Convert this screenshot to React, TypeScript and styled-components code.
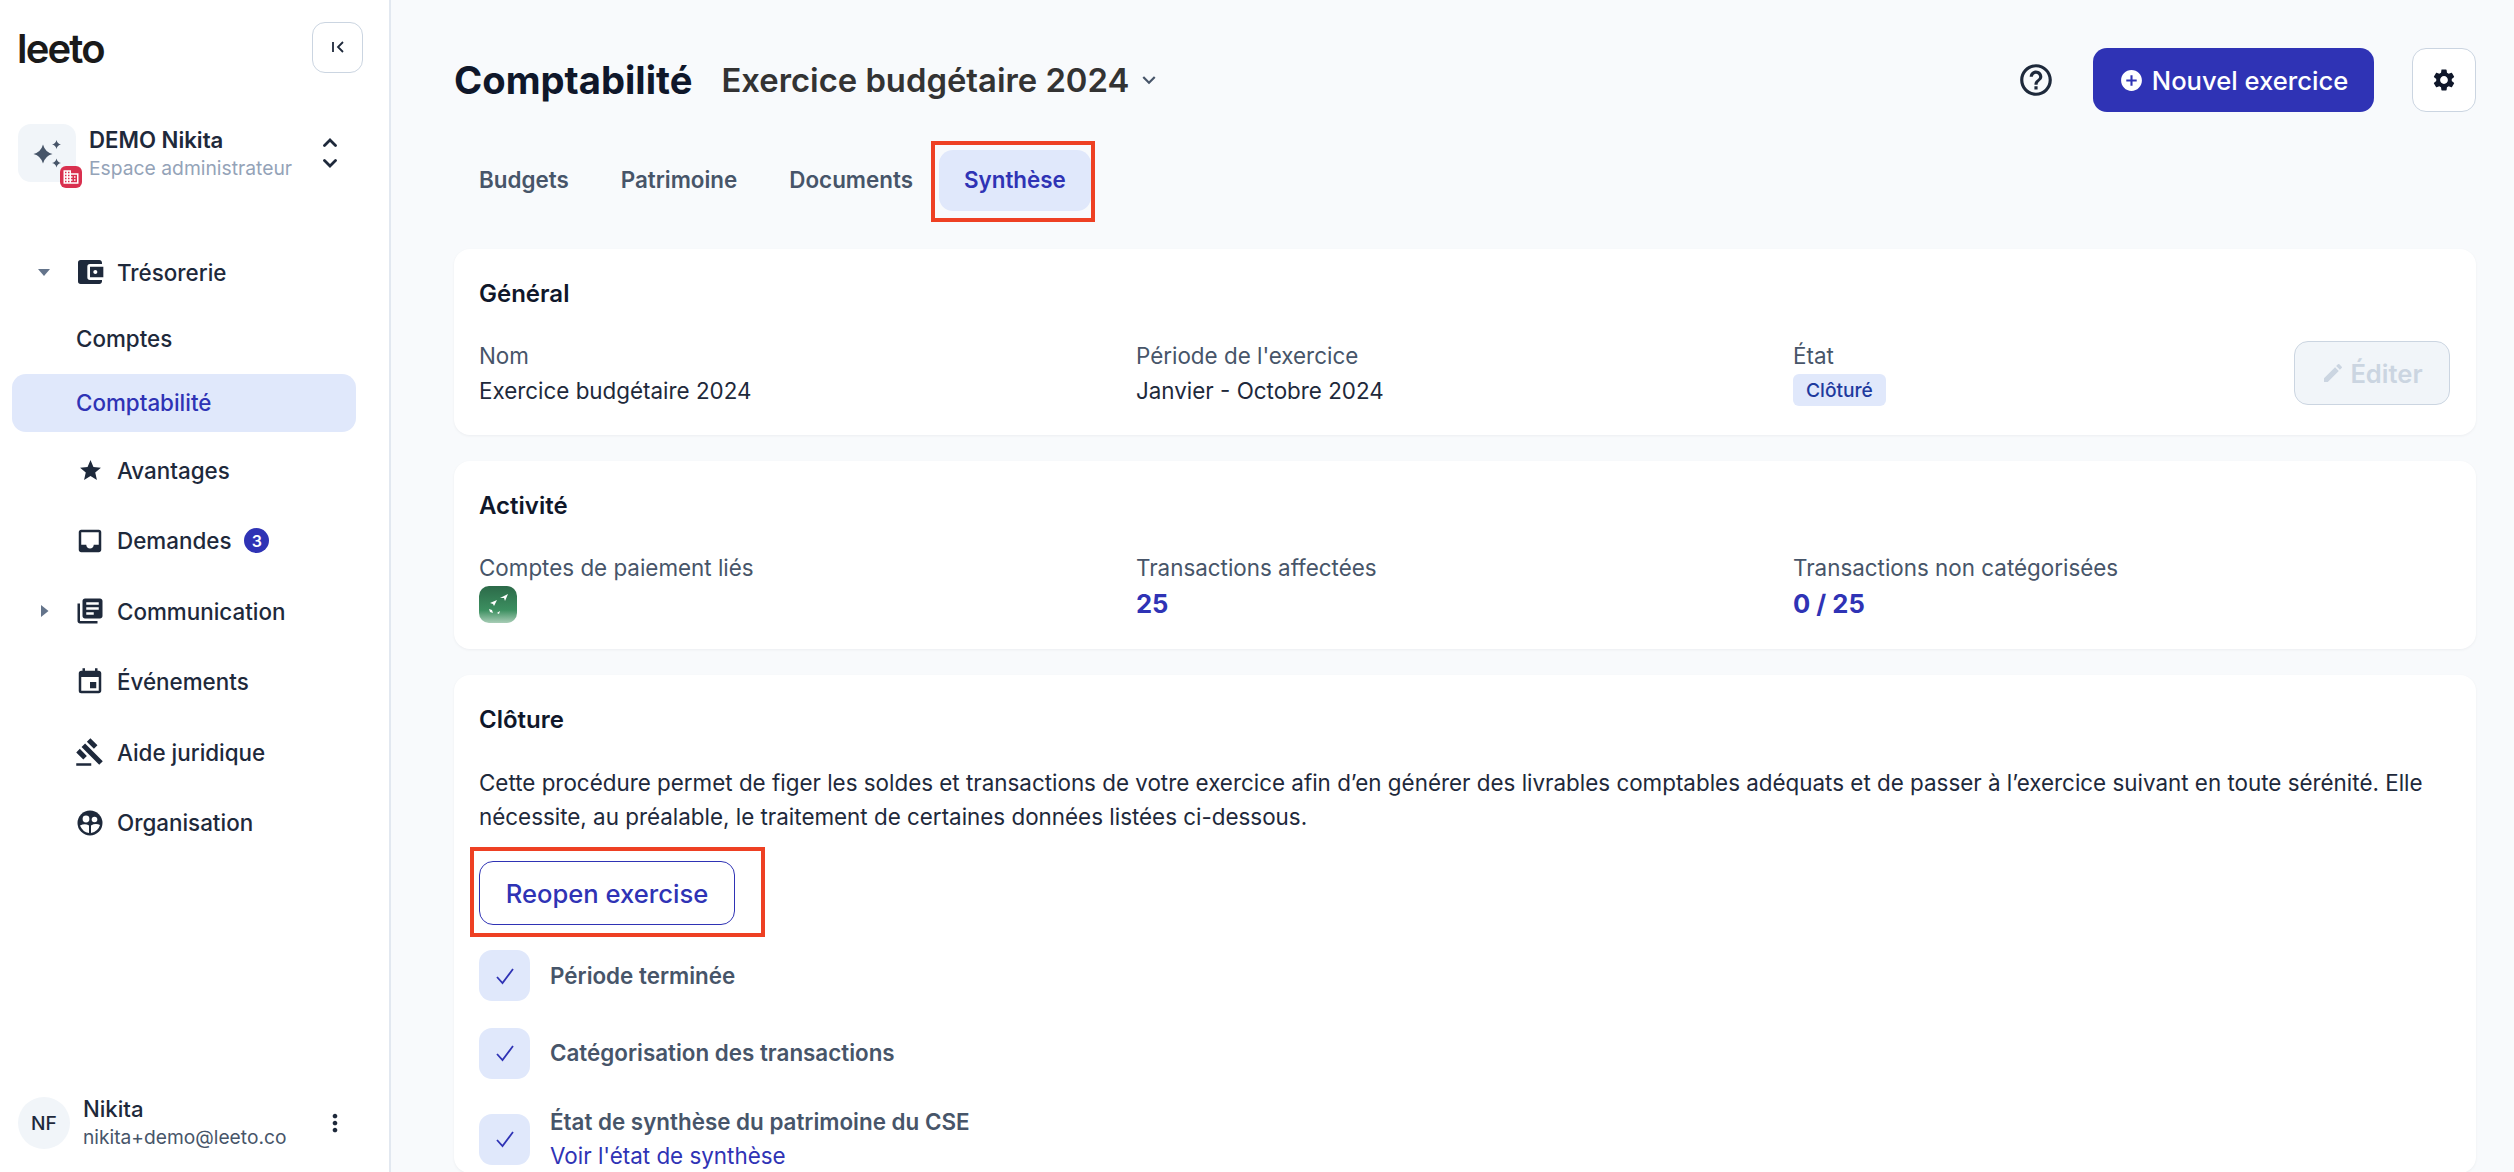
import React from "react";
import styled, { createGlobalStyle } from "styled-components";
import {
  MdAccountBalanceWallet,
  MdAddCircle,
  MdBusiness,
  MdEdit,
  MdEvent,
  MdGavel,
  MdHelpOutline,
  MdInbox,
  MdKeyboardArrowDown,
  MdLibraryBooks,
  MdMoreVert,
  MdSettings,
  MdStar,
} from "react-icons/md";

const GlobalStyle = createGlobalStyle`
  html, body {
    margin: 0;
    height: 100%;
    overflow: hidden;
    background: #f8fafc;
    font-family: Inter, "Liberation Sans", sans-serif;
    color: #1e293b;
  }
  * { box-sizing: border-box; }
`;

const Page = styled.div`
  display: grid;
  grid-template-columns: 391px 1fr;
  height: 1172px;
  overflow: hidden;
`;

/* sidebar */
const Sidebar = styled.aside`
  display: flex;
  flex-direction: column;
  padding-top: 22px;
  background: #fff;
  border-right: 2px solid #e2e8f0;
`;
const SidebarHeader = styled.div`
  display: flex;
  align-items: center;
  justify-content: space-between;
  height: 50px;
  padding: 0 26px 0 17px;
`;
const Logo = styled.span`
  padding-top: 4px;
  font-family: Inter, sans-serif;
  font-size: 40px;
  font-weight: 600;
  line-height: 50px;
  letter-spacing: -1.8px;
  color: #1a1a1a;
`;
const CollapseButton = styled.button`
  display: flex;
  align-items: center;
  justify-content: center;
  width: 51px;
  height: 51px;
  padding: 0;
  background: #fff;
  border: 1px solid #cbd5e1;
  border-radius: 13px;
`;
const Workspace = styled.div`
  display: flex;
  align-items: center;
  height: 63px;
  margin-top: 52px;
  padding-left: 18px;
`;
const WorkspaceIcon = styled.div`
  position: relative;
  display: flex;
  align-items: center;
  justify-content: center;
  flex: none;
  width: 58px;
  height: 58px;
  margin-bottom: 5px;
  background: #f1f5f9;
  border-radius: 13px;
`;
const WorkspaceBadge = styled.span`
  position: absolute;
  right: -6px;
  bottom: -6px;
  display: flex;
  align-items: center;
  justify-content: center;
  width: 22px;
  height: 22px;
  background: #d9304f;
  border-radius: 6px;
  color: #fff;
`;
const WorkspaceText = styled.div`
  flex: 1;
  margin-left: 13px;
  margin-bottom: 6px;
`;
const WorkspaceName = styled.div`
  font-size: 22.2px;
  font-weight: 600;
  line-height: 30px;
`;
const WorkspaceRole = styled.div`
  font-size: 19.3px;
  line-height: 26px;
  color: #94a3b8;
`;
const SwitchIcon = styled.svg`
  flex: none;
  margin: 0 52px 6px 0;
`;
const Nav = styled.nav`
  display: flex;
  flex-direction: column;
  margin-top: 50px;
`;
const NavRow = styled.div`
  display: flex;
  align-items: center;
  height: 70.4px;
  padding-left: 77px;
  position: relative;
  font-size: 22.4px;
  font-weight: 500;
`;
const NavCaret = styled.svg`
  position: absolute;
  left: 30px;
  top: 50%;
  width: 28px;
  height: 14px;
  margin-top: -7px;
  fill: #64748b;
`;
const NavIcon = styled.span`
  display: flex;
  align-items: center;
  justify-content: center;
  width: 26px;
  margin-right: 14px;
  color: #1e293b;
  svg { flex: none; }
`;
const NavCount = styled.span`
  display: flex;
  align-items: center;
  justify-content: center;
  width: 25px;
  height: 25px;
  margin-left: 13px;
  background: #2f33b5;
  border-radius: 50%;
  color: #fff;
  font-size: 16px;
  font-weight: 600;
`;
const SubRow = styled.div<{ $active?: boolean }>`
  display: flex;
  align-items: center;
  height: 58px;
  margin: 3px 33px 3px 12px;
  padding: 0 0 2px 64px;
  border-radius: 14px;
  font-size: 22.4px;
  font-weight: 500;
  background: ${(p) => (p.$active ? "#e0e8fb" : "transparent")};
  color: ${(p) => (p.$active ? "#2f33b5" : "#1e293b")};
`;
const UserBar = styled.div`
  display: flex;
  align-items: center;
  margin-top: auto;
  padding: 0 0 21px 18px;
`;
const Avatar = styled.div`
  display: flex;
  align-items: center;
  justify-content: center;
  flex: none;
  width: 52px;
  height: 52px;
  background: #f1f5f9;
  border-radius: 50%;
  font-size: 19.2px;
  font-weight: 500;
`;
const UserText = styled.div`
  flex: 1;
  margin-left: 13px;
`;
const UserName = styled.div`
  font-size: 22.2px;
  font-weight: 500;
  line-height: 28px;
`;
const UserMail = styled.div`
  font-size: 19.2px;
  line-height: 28px;
  color: #475569;
`;
const UserMenu = styled.span`
  display: flex;
  margin-right: 40px;
  color: #1e293b;
`;

/* main column */
const Main = styled.main`
  min-width: 0;
  padding: 48px 38px 0 63px;
  overflow: hidden;
`;
const TopBar = styled.header`
  display: flex;
  align-items: center;
  height: 64px;
`;
const Title = styled.h1`
  margin: 0;
  font-size: 38.2px;
  font-weight: 700;
  color: #0f172a;
`;
const Subtitle = styled.h2`
  margin: 0 0 0 29px;
  font-size: 32.8px;
  font-weight: 600;
  color: #333;
`;
const SubtitleCaret = styled.span`
  display: flex;
  margin-left: 7px;
  color: #475569;
`;
const TopActions = styled.div`
  display: flex;
  align-items: center;
  margin-left: auto;
`;
const HelpIcon = styled.span`
  display: flex;
  margin-right: 38px;
  color: #1e293b;
`;
const PrimaryButton = styled.button`
  display: flex;
  align-items: center;
  justify-content: center;
  gap: 8px;
  width: 281px;
  height: 64px;
  padding: 0;
  background: #2f33b5;
  border: none;
  border-radius: 14px;
  color: #fff;
  font-family: inherit;
  font-size: 25.6px;
  font-weight: 500;
`;
const SquareButton = styled.button`
  display: flex;
  align-items: center;
  justify-content: center;
  width: 64px;
  height: 64px;
  margin-left: 38px;
  padding: 0;
  background: #fff;
  border: 1px solid #cbd5e1;
  border-radius: 14px;
  color: #0f172a;
`;
const Tabs = styled.div`
  display: flex;
  gap: 2px;
  height: 61px;
  margin-top: 38px;
`;
const Flagged = styled.div<{ $inset: string }>`
  position: relative;
  &::after {
    content: "";
    position: absolute;
    inset: ${(p) => p.$inset};
    border: 4px solid #ee4023;
    pointer-events: none;
  }
`;
const FlaggedTab = styled(Flagged)`
  margin-left: -1px;
`;
const Tab = styled.div<{ $active?: boolean }>`
  display: flex;
  align-items: center;
  height: 61px;
  padding: 0 25px 3px;
  border-radius: 14px;
  font-size: 22.4px;
  font-weight: 600;
  background: ${(p) => (p.$active ? "#e0e8fb" : "transparent")};
  color: ${(p) => (p.$active ? "#2f33b5" : "#475569")};
`;
const Cards = styled.div`
  display: flex;
  flex-direction: column;
  gap: 26px;
  margin-top: 38px;
`;
const Card = styled.section<{ $height?: number }>`
  padding: 30px 26px 0 25px;
  min-height: ${(p) => (p.$height ? `${p.$height}px` : "auto")};
  background: #fff;
  border-radius: 16px;
  box-shadow: 0 1px 3px rgba(15, 23, 42, 0.05);
`;
const CardTitle = styled.h3`
  margin: 0;
  font-size: 24px;
  font-weight: 600;
  line-height: 30px;
  color: #0f172a;
`;
const FieldRow = styled.div`
  display: flex;
  align-items: center;
  margin-top: 29px;
`;
const FieldGrid = styled.div`
  flex: 1;
  display: grid;
  grid-template-columns: 657px 657px 1fr;
`;
const FieldLabel = styled.div`
  font-size: 22.4px;
  line-height: 36px;
  color: #475569;
`;
const FieldValue = styled.div`
  font-size: 22.4px;
  line-height: 34px;
  color: #1e293b;
`;
const FieldStat = styled.div`
  font-size: 25.6px;
  font-weight: 700;
  line-height: 36px;
  color: #2f33b5;
`;
const Tag = styled.span`
  display: inline-block;
  height: 32px;
  padding: 0 13px;
  background: #e0e8fb;
  border-radius: 6px;
  color: #1e3a9e;
  font-size: 19.2px;
  font-weight: 500;
  line-height: 32px;
`;
const EditButton = styled.button`
  display: flex;
  align-items: center;
  justify-content: center;
  gap: 5px;
  flex: none;
  width: 156px;
  height: 64px;
  padding: 0;
  background: #f1f5f9;
  border: 1px solid #cbd5e1;
  border-radius: 14px;
  color: #cbd5e1;
  font-family: inherit;
  font-size: 25.6px;
  font-weight: 600;
`;
const BankLogo = styled.svg`
  display: block;
  width: 38px;
  height: 37px;
`;
const Paragraph = styled.p`
  margin: 31px 0 0;
  font-size: 22.4px;
  line-height: 33.5px;
  color: #1e293b;
`;
const OutlineWrap = styled(Flagged)`
  display: block;
  width: 256px;
  margin-top: 28px;
`;
const OutlineButton = styled.button`
  display: block;
  width: 256px;
  height: 64px;
  padding: 0;
  background: #fff;
  border: 1px solid #2f33b5;
  border-radius: 14px;
  color: #2f33b5;
  font-family: inherit;
  font-size: 25.6px;
  font-weight: 500;
`;
const CheckList = styled.div`
  display: flex;
  flex-direction: column;
  gap: 26.5px;
  margin-top: 25px;
`;
const CheckRow = styled.div`
  display: flex;
  align-items: center;
  gap: 20px;
`;
const CheckBox = styled.span`
  display: flex;
  align-items: center;
  justify-content: center;
  flex: none;
  width: 51px;
  height: 51px;
  background: #e0e8fb;
  border-radius: 13px;
`;
const CheckLabel = styled.div`
  font-size: 22.4px;
  font-weight: 600;
  line-height: 34px;
  color: #475569;
`;
const CheckLink = styled.a`
  display: block;
  font-size: 22.4px;
  line-height: 34px;
  color: #2f33b5;
`;

const Sparkles = () => (
  <svg width="32" height="32" viewBox="0 0 32 32" fill="#475569">
    <path d="M12 7.500Q14 15 21.500 17 14 19 12 26.500 10 19 2.500 17 10 15 12 7.500z" />
    <path d="M25.500 3Q26.300 6.700 30 7.500 26.300 8.300 25.500 12 24.700 8.300 21 7.500 24.700 6.700 25.500 3z" />
    <path d="M25.500 21.500Q26.300 25.200 30 26 26.300 26.800 25.500 30.500 24.700 26.800 21 26 24.700 25.200 25.500 21.500z" />
  </svg>
);

const CollapseIcon = () => (
  <svg width="14" height="14" viewBox="0 0 14 14" fill="none" stroke="#1e293b" strokeWidth="1.8">
    <path d="M2 2v10" />
    <path d="M12 2L7 7l5 5" />
  </svg>
);

const CheckIcon = () => (
  <svg width="20" height="18" viewBox="0 0 20 18" fill="none" stroke="#2f33b5" strokeWidth="1.8">
    <path d="M2 10l5.500 6L18 2" />
  </svg>
);

const OrganisationIcon = () => (
  <svg width="26" height="26" viewBox="0 0 26 26">
    <circle cx="13" cy="13" r="12.500" fill="#1e293b" />
    <circle cx="9" cy="9" r="3.400" fill="#fff" />
    <circle cx="17.500" cy="9.500" r="2.800" fill="#fff" />
    <path d="M3 15.500Q8 13 12 15.500V23Q5.500 22 3 15.500z" fill="#fff" />
    <path d="M14 15.500Q18.500 13 23 15Q21 21.500 14 23z" fill="#fff" />
  </svg>
);

const App = () => {
  return (
    <>
      <GlobalStyle />
      <Page>
        <Sidebar>
          <SidebarHeader>
            <Logo>leeto</Logo>
            <CollapseButton>
              <CollapseIcon />
            </CollapseButton>
          </SidebarHeader>
          <Workspace>
            <WorkspaceIcon>
              <Sparkles />
              <WorkspaceBadge>
                <MdBusiness size={18} />
              </WorkspaceBadge>
            </WorkspaceIcon>
            <WorkspaceText>
              <WorkspaceName>DEMO Nikita</WorkspaceName>
              <WorkspaceRole>Espace administrateur</WorkspaceRole>
            </WorkspaceText>
            <SwitchIcon width="14" height="30" viewBox="0 0 14 30" fill="none" stroke="#1e293b" strokeWidth="2.800" strokeLinecap="round">
              <path d="M1.500 7.500L7 2l5.500 5.500" />
              <path d="M1.500 22.500L7 28l5.500-5.500" />
            </SwitchIcon>
          </Workspace>
          <Nav>
            <NavRow>
              <NavCaret viewBox="0 0 28 14">
                <path d="M8 4h12L14 11z" />
              </NavCaret>
              <NavIcon>
                <MdAccountBalanceWallet size={32} />
              </NavIcon>
              Trésorerie
            </NavRow>
            <SubRow>Comptes</SubRow>
            <SubRow $active>Comptabilité</SubRow>
            <NavRow>
              <NavIcon>
                <MdStar size={25} />
              </NavIcon>
              Avantages
            </NavRow>
            <NavRow>
              <NavIcon>
                <MdInbox size={30} />
              </NavIcon>
              Demandes
              <NavCount>3</NavCount>
            </NavRow>
            <NavRow>
              <NavCaret viewBox="0 0 28 14">
                <path d="M11 1l7.500 6L11 13z" />
              </NavCaret>
              <NavIcon>
                <MdLibraryBooks size={30} />
              </NavIcon>
              Communication
            </NavRow>
            <NavRow>
              <NavIcon>
                <MdEvent size={30} />
              </NavIcon>
              Événements
            </NavRow>
            <NavRow>
              <NavIcon>
                <MdGavel size={30} />
              </NavIcon>
              Aide juridique
            </NavRow>
            <NavRow>
              <NavIcon>
                <OrganisationIcon />
              </NavIcon>
              Organisation
            </NavRow>
          </Nav>
          <UserBar>
            <Avatar>NF</Avatar>
            <UserText>
              <UserName>Nikita</UserName>
              <UserMail>nikita+demo@leeto.co</UserMail>
            </UserText>
            <UserMenu>
              <MdMoreVert size={28} />
            </UserMenu>
          </UserBar>
        </Sidebar>
        <Main>
          <TopBar>
            <Title>Comptabilité</Title>
            <Subtitle>Exercice budgétaire 2024</Subtitle>
            <SubtitleCaret>
              <MdKeyboardArrowDown size={26} />
            </SubtitleCaret>
            <TopActions>
              <HelpIcon>
                <MdHelpOutline size={38} />
              </HelpIcon>
              <PrimaryButton>
                <MdAddCircle size={25} />
                Nouvel exercice
              </PrimaryButton>
              <SquareButton>
                <MdSettings size={26} />
              </SquareButton>
            </TopActions>
          </TopBar>
          <Tabs>
            <Tab>Budgets</Tab>
            <Tab>Patrimoine</Tab>
            <Tab>Documents</Tab>
            <FlaggedTab $inset="-9px -4px -11px -8px">
              <Tab $active>Synthèse</Tab>
            </FlaggedTab>
          </Tabs>
          <Cards>
            <Card $height={186}>
              <CardTitle>Général</CardTitle>
              <FieldRow>
                <FieldGrid>
                  <div>
                    <FieldLabel>Nom</FieldLabel>
                    <FieldValue>Exercice budgétaire 2024</FieldValue>
                  </div>
                  <div>
                    <FieldLabel>Période de l'exercice</FieldLabel>
                    <FieldValue>Janvier - Octobre 2024</FieldValue>
                  </div>
                  <div>
                    <FieldLabel>État</FieldLabel>
                    <Tag>Clôturé</Tag>
                  </div>
                </FieldGrid>
                <EditButton>
                  <MdEdit size={24} />
                  Éditer
                </EditButton>
              </FieldRow>
            </Card>
            <Card $height={188}>
              <CardTitle>Activité</CardTitle>
              <FieldRow>
                <FieldGrid>
                  <div>
                    <FieldLabel>Comptes de paiement liés</FieldLabel>
                    <BankLogo viewBox="0 0 38 37">
                      <defs>
                        <linearGradient id="bank" x1="0" y1="0" x2="0" y2="1">
                          <stop offset="0" stopColor="#2c6a49" />
                          <stop offset="0.65" stopColor="#3c8f60" />
                          <stop offset="1" stopColor="#a8cdb6" />
                        </linearGradient>
                      </defs>
                      <rect width="38" height="37" rx="10" fill="url(#bank)" />
                      <path d="M21 12l8-4-3 7-1-3zM11 17l7-3-3 6-1-2zM10 23l3 1 1 3-3-1zM18 27l3-2-1 3z" fill="#fff" />
                    </BankLogo>
                  </div>
                  <div>
                    <FieldLabel>Transactions affectées</FieldLabel>
                    <FieldStat>25</FieldStat>
                  </div>
                  <div>
                    <FieldLabel>Transactions non catégorisées</FieldLabel>
                    <FieldStat>0 / 25</FieldStat>
                  </div>
                </FieldGrid>
              </FieldRow>
            </Card>
            <Card>
              <CardTitle>Clôture</CardTitle>
              <Paragraph>
                Cette procédure permet de figer les soldes et transactions de votre exercice afin d’en générer des livrables comptables adéquats et de passer à l’exercice suivant en toute sérénité. Elle nécessite, au préalable, le traitement de certaines données listées ci-dessous.
              </Paragraph>
              <OutlineWrap $inset="-14px -30px -12px -9px">
                <OutlineButton>Reopen exercise</OutlineButton>
              </OutlineWrap>
              <CheckList>
                <CheckRow>
                  <CheckBox>
                    <CheckIcon />
                  </CheckBox>
                  <CheckLabel>Période terminée</CheckLabel>
                </CheckRow>
                <CheckRow>
                  <CheckBox>
                    <CheckIcon />
                  </CheckBox>
                  <CheckLabel>Catégorisation des transactions</CheckLabel>
                </CheckRow>
                <CheckRow>
                  <CheckBox>
                    <CheckIcon />
                  </CheckBox>
                  <div>
                    <CheckLabel>État de synthèse du patrimoine du CSE</CheckLabel>
                    <CheckLink>Voir l'état de synthèse</CheckLink>
                  </div>
                </CheckRow>
              </CheckList>
            </Card>
          </Cards>
        </Main>
      </Page>
    </>
  );
};

export default App;
